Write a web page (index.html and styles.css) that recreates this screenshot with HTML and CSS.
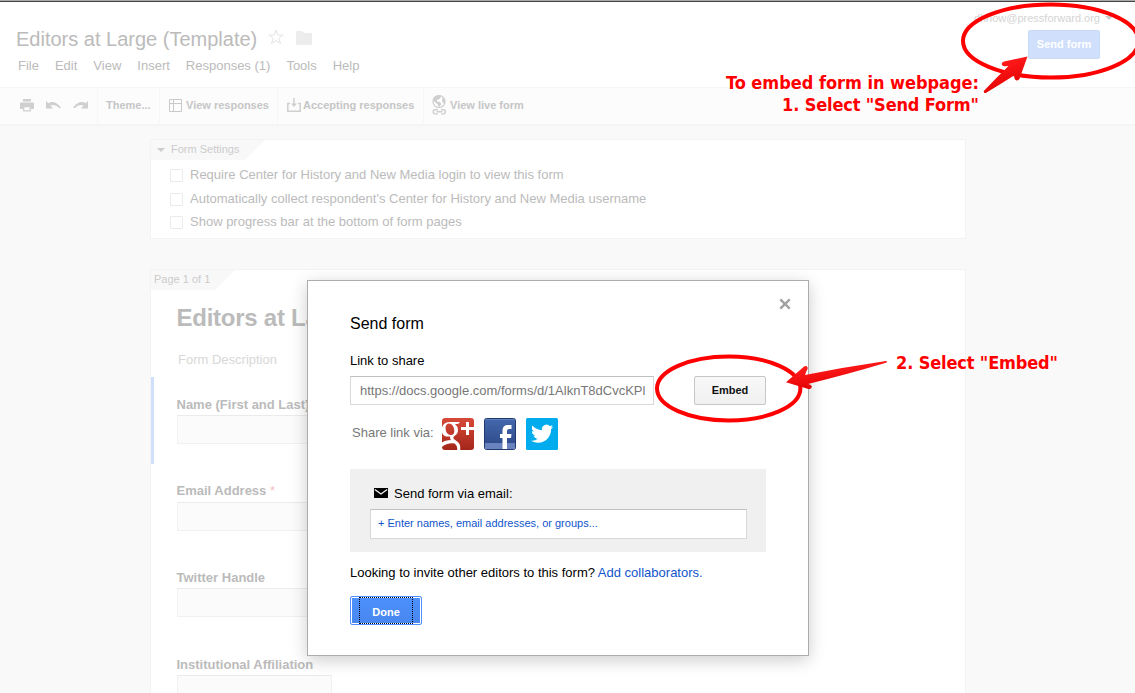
FILE: index.html
```html
<!DOCTYPE html>
<html lang="en">
<head>
<meta charset="utf-8">
<title>Editors at Large (Template)</title>
<link rel="stylesheet" href="styles.css">
</head>
<body>
<div class="app">
  <header class="header">
    <div class="doc">
      <div class="doc-title">
        <h1>Editors at Large (Template)</h1>
        <svg class="star" width="16" height="16" viewBox="0 0 16 16"><path d="M8 1l1.800 5h5.400l-4.300 3.300 1.600 5.300L8 11.500l-4.500 3.100 1.600-5.300L.8 6h5.400z" fill="none" stroke="#e4e4e4"/></svg>
        <svg class="folder" width="16" height="14" viewBox="0 0 16 14"><path d="M0 1q0-1 1-1h5l2 2h7q1 0 1 1v10q0 1-1 1H1q-1 0-1-1z" fill="#ececec"/></svg>
      </div>
      <nav class="menu"><span>File</span><span>Edit</span><span>View</span><span>Insert</span><span>Responses (1)</span><span>Tools</span><span>Help</span></nav>
    </div>
    <div class="account">
      <div class="user">dhnow@pressforward.org<i class="caret"></i></div>
      <button class="send-btn">Send form</button>
    </div>
  </header>

  <div class="toolbar">
    <div class="tool icons">
      <svg width="14" height="13" viewBox="0 0 14 13"><path fill="#cfcfcf" d="M3 0h8v2.500H3zM1 3.500h12q1 0 1 1V10h-3V7H3v3H0V4.500q0-1 1-1z"/><path fill="none" stroke="#cfcfcf" stroke-width="1.300" d="M3.700 7.500h6.600v4.300H3.700z"/></svg>
      <svg width="15" height="9" viewBox="0 0 15 9"><path fill="#cfcfcf" d="M0 0l2.300 2.300Q8-1.500 15 6.500l-1.500.8Q9 2.500 4.400 4.500L7 7.500H0z"/></svg>
      <svg width="15" height="9" viewBox="0 0 15 9"><path fill="#cfcfcf" d="M15 0l-2.300 2.300Q7-1.500 0 6.500l1.500.8Q6 2.500 10.600 4.500L8 7.500h7z"/></svg>
    </div>
    <div class="tool theme">Theme...</div>
    <div class="tool view">
      <svg width="13" height="13" viewBox="0 0 13 13"><path fill="none" stroke="#c9c9c9" d="M.5.5h12v12H.5zM4.500.5v12M.5 4.500h12" /></svg>
      <span>View responses</span>
    </div>
    <div class="tool accept">
      <svg width="14" height="14" viewBox="0 0 14 14"><path fill="none" stroke="#cfcfcf" stroke-width="1.500" d="M3 5.500H.8v7.700h12.400V5.500H11M7 0v8"/><path fill="#cfcfcf" d="M4 5.500h6L7 9z"/></svg>
      <span>Accepting responses</span>
    </div>
    <div class="tool live">
      <svg width="15" height="20" viewBox="0 0 15 20"><circle cx="7" cy="6.500" r="6" fill="#fff" stroke="#cfcfcf" stroke-width="1.200"/><path fill="#cfcfcf" d="M1 4q2-4 7-3.500L9 2 7.500 4 5 5v1.500l3 .5 1.500 2L7 12.500 5.500 9 2.500 7zM10 3l2.500 1 .7 3-1 2-2-2z"/><path fill="none" stroke="#cfcfcf" stroke-width="1.400" d="M6 14.700H3.300a2.100 2.100 0 0 0 0 4.200H6M9 14.700h2.300a2.100 2.100 0 0 1 0 4.200H9M4.500 16.800h6"/></svg>
      <span>View live form</span>
    </div>
  </div>

  <main class="canvas">
    <section class="card settings">
      <div class="tab"><i class="caret"></i>Form Settings</div>
      <ul>
        <li><i class="box"></i>Require Center for History and New Media login to view this form</li>
        <li><i class="box"></i>Automatically collect respondent's Center for History and New Media username</li>
        <li><i class="box"></i>Show progress bar at the bottom of form pages</li>
      </ul>
    </section>
    <section class="card page">
      <div class="tab">Page 1 of 1</div>
      <h2>Editors at Large</h2>
      <p class="desc">Form Description</p>
      <div class="question active"><label>Name (First and Last)</label><div class="field"></div></div>
      <div class="question email"><label>Email Address <em>*</em></label><div class="field"></div></div>
      <div class="question twitter"><label>Twitter Handle</label><div class="field"></div></div>
      <div class="question"><label>Institutional Affiliation</label><div class="field"></div></div>
    </section>
  </main>
</div>

<div class="dialog">
  <svg class="close" width="12" height="12" viewBox="0 0 12 12"><path d="M1.300 1.300l9.400 9.400M10.700 1.300l-9.400 9.400" stroke="#a2a2a2" stroke-width="2.400"/></svg>
  <h3>Send form</h3>
  <p class="link-label">Link to share</p>
  <div class="link-row">
    <div class="link-input"><span>https://docs.google.com/forms/d/1AlknT8dCvcKPl</span></div>
    <button class="embed">Embed</button>
  </div>
  <div class="share">
    <span>Share link via:</span>
    <svg width="32" height="32" viewBox="0 0 32 32">
      <defs><linearGradient id="gr" x2="0" y2="1"><stop offset="0" stop-color="#d84a38"/><stop offset="1" stop-color="#a3261a"/></linearGradient><clipPath id="gc"><rect width="32" height="32" rx="3"/></clipPath></defs>
      <g clip-path="url(#gc)"><rect width="32" height="32" fill="url(#gr)"/>
      <path fill="#fff" fill-rule="evenodd" d="M8.500 4H18l-2 2h-3q3 2.500 3 6 0 3.500-3 5.500-1.700 1.300-1.700 2.200 0 1 2.200 2.500 4.700 3 4.700 6.300V32h-3q.5-4-2.500-6.500Q5 24.500 0 29v-4.500Q3 22 9 22q-1.500-1.700-.7-3.500Q0 19.500-.5 12 0 4 8.500 4zM7.500 5.500Q3.500 5.500 3.500 10q.5 7 5.200 7 3.800-.3 3.600-4.500-.8-6.500-4.800-7z"/>
      <path d="M25.500 4v13M19 10.500h13" stroke="#fff" stroke-width="3"/></g>
    </svg>
    <svg width="32" height="32" viewBox="0 0 32 32">
      <defs><linearGradient id="fb" x2="0" y2="1"><stop offset="0" stop-color="#4468ad"/><stop offset="1" stop-color="#2c4786"/></linearGradient></defs>
      <rect x=".5" y=".5" width="31" height="31" rx="2" fill="url(#fb)" stroke="#20396f"/><path fill="#6883bd" d="M1 25h30v6H1z"/><path stroke="#5f80be" d="M1.500 1.500h29"/><path fill="#fff" d="M18.500 31V20H16v-4h2.500v-3.500q0-5.500 5.500-5.500h3.500v4H25q-2 0-2 2v3h4.500l-.5 4h-4v11z"/>
    </svg>
    <svg width="32" height="32" viewBox="0 0 32 32">
      <rect width="32" height="32" rx="1.500" fill="#00aced"/><path fill="#fff" transform="translate(5 4.500) scale(.93)" d="M23.950 4.570a10 10 0 0 1-2.820.77 4.960 4.960 0 0 0 2.160-2.720c-.95.560-2 .96-3.120 1.180a4.920 4.920 0 0 0-8.380 4.480C7.690 8.100 4.070 6.130 1.640 3.160a4.820 4.820 0 0 0-.67 2.480c0 1.710.87 3.210 2.190 4.100a4.900 4.900 0 0 1-2.230-.62v.06a4.920 4.920 0 0 0 3.950 4.830 5 5 0 0 1-2.210.08 4.940 4.940 0 0 0 4.600 3.420A9.870 9.870 0 0 1 0 19.540a13.990 13.990 0 0 0 7.550 2.210c9.050 0 14-7.500 14-13.980 0-.21 0-.42-.02-.63a9.940 9.940 0 0 0 2.420-2.570z"/>
    </svg>
  </div>
  <div class="mail">
    <div class="mail-label">
      <svg width="14" height="10" viewBox="0 0 14 10"><path d="M0 0h14v10H0z"/><path d="M.8 1.500L7 6l6.200-4.500" fill="none" stroke="#f0f0f0" stroke-width="1.400"/></svg>
      <span>Send form via email:</span>
    </div>
    <div class="mail-input">+ Enter names, email addresses, or groups...</div>
  </div>
  <p class="invite">Looking to invite other editors to this form? <a>Add collaborators.</a></p>
  <button class="done"><span>Done</span></button>
</div>

<svg class="marks" width="1135" height="693" viewBox="0 0 1135 693">
  <defs><linearGradient id="ar" x2=".4" y2="1"><stop offset=".3" stop-color="#ff1a1a"/><stop offset="1" stop-color="#e00000"/></linearGradient></defs>
  <g fill="none" stroke="#f00" stroke-width="4"><ellipse cx="1050.700" cy="41" rx="87.700" ry="36.500"/><ellipse cx="728.700" cy="388.500" rx="71.700" ry="32"/></g>
  <path fill="url(#ar)" d="M1027.500 56.500L1004 61.500q-3 1-2 3.500 1 1.500 3.500 1.200L1008.500 66Q996 78 983.800 91q-.3 2.500 2 2Q1000 84.500 1014 75.500l.5 3q1 2.500 3.500 1.800 2-.8 2-3z"/>
  <path fill="url(#ar)" d="M786 382.300L803.500 367q2.500-1.800 4 0 .8 2-1 4l-1.500 4Q845 367 886 361q2 .5 0 1.800Q845 375 808 384l2.500.8q2 1.500 1 3.300-1.500 1.500-4 .7z"/>
  <g class="note"><text x="979" y="89" text-anchor="end" textLength="253">To embed form in webpage:</text><text x="979" y="111" text-anchor="end" textLength="197">1. Select "Send Form"</text><text x="896" y="369" textLength="162">2. Select "Embed"</text></g>
</svg>
</body>
</html>
```
FILE: styles.css
```css
* { box-sizing: border-box; margin: 0; padding: 0; }
body { width: 1135px; height: 693px; overflow: hidden; position: relative; background: #f9f9f9; font: 13px/16px "Liberation Sans", Arial, sans-serif; color: #000; }
svg { display: block; flex: none; }
button { font: bold 11px/14px "Liberation Sans", Arial, sans-serif; border-radius: 2px; padding-bottom: 2px; }
i { font-style: normal; }

.app { height: 693px; overflow: hidden; color: #bbb; }
.header { height: 87px; border-top: 1px solid #aaa; box-shadow: inset 0 1px #444; background: #fff; display: flex; justify-content: space-between; padding: 26px 35px 0 16px; }
.doc-title { display: flex; align-items: flex-start; }
.doc-title h1 { font-size: 20px; line-height: 24px; font-weight: normal; }
.star { margin: 2px 0 0 11px; }
.folder { margin: 4px 0 0 12px; }
.menu { display: flex; gap: 16px; margin: 7px 0 0 2px; }
.account { margin-top: -16px; display: flex; flex-direction: column; align-items: flex-end; }
.user { font-size: 11px; line-height: 14px; color: #d4d4d4; display: flex; align-items: center; margin-right: -13px; }
.caret { display: inline-block; border: 4px solid transparent; border-top-color: #ccc; border-bottom: 0; }
.user .caret { margin-left: 5px; }
.send-btn { width: 72px; height: 29px; margin-top: 5px; border: 1px solid #c9dbf9; background: #d0e0fc; color: #fff; }

.toolbar { height: 37px; background: #fcfcfc; border-top: 1px solid #f6f6f6; box-shadow: 0 1px 2px #f2f2f2; display: flex; color: #c6c6c6; font: bold 11px/14px "Liberation Sans", Arial, sans-serif; }
.tool { display: flex; align-items: center; border-right: 1px solid #f7f7f7; padding-bottom: 2px; }
.tool:last-child { border: 0; }
.icons { width: 98px; padding-left: 20px; gap: 12px; }
.theme { width: 62px; padding-left: 8px; }
.view { width: 118px; padding-left: 9px; gap: 4px; }
.accept { width: 146px; padding-left: 9px; gap: 2px; }
.live { padding-left: 8px; gap: 3px; }

.canvas { padding: 15px 169px 0 150px; }
.card { border: 1px solid #f3f3f3; background: #fff; }
.tab { height: 20px; line-height: 19px; background: #f8f8f8; font-size: 11px; color: #ccc; clip-path: polygon(0 0, 100% 0, calc(100% - 20px) 100%, 0 100%); }
.settings { height: 100px; }
.settings .tab { width: 114px; padding: 0 0 2px 6px; display: flex; align-items: center; }
.settings .caret { margin: 2px 6px 0 0; }
.settings ul { list-style: none; padding: 3px 0 0 19px; display: grid; grid-template-rows: 24px 24px 22px; }
.settings li { display: flex; align-items: center; }
.box { width: 13px; height: 13px; border: 1px solid #ebebeb; border-radius: 1px; margin: 1px 7px 0 0; }
.page { margin-top: 30px; height: 480px; }
.page .tab { width: 84px; padding-left: 3px; }
.page h2 { margin: 14px 0 0 25.500px; font-size: 24px; line-height: 28px; letter-spacing: -.25px; }
.desc { margin: 20px 0 0 27px; color: #d8d8d8; }
.question { height: 87px; padding: 20px 0 0 25.500px; font-weight: bold; }
.question label { display: block; }
.question em { font-style: normal; font-weight: normal; color: #f3c1bb; }
.active { margin-top: 9px; border-left: 3px solid #d0e0fc; padding-left: 22.500px; }
.active .field { margin-top: 2px; }
.email { height: 86px; padding-top: 19px; }
.field { width: 155px; height: 29px; margin: 3px 0 0 .5px; background: #fbfbfb; border: 1px solid #f1f1f1; border-top-color: #ebebeb; }
.twitter .field, .twitter + .question .field { margin-top: 2px; }

.dialog { position: absolute; left: 307px; top: 280px; width: 502px; height: 376px; border: 1px solid #acacac; background: #fff; box-shadow: 0 4px 16px rgba(0,0,0,.2); padding: 33px 42px 0; }
.close { position: absolute; right: 17px; top: 17px; }
.dialog h3 { font-size: 16px; line-height: 20px; font-weight: normal; }
.link-label { margin-top: 19px; }
.link-row { display: flex; justify-content: space-between; margin-top: 7px; }
.link-input { width: 304px; height: 29px; border: 1px solid #d9d9d9; border-top-color: #c0c0c0; padding: 6px 8px 0 9px; color: #777; }
.link-input span { display: block; overflow: hidden; white-space: nowrap; }
.embed { width: 72px; height: 29px; border: 1px solid #c6c6c6; background: linear-gradient(#f8f8f8, #f0f0f0); color: #111; }
.share { display: flex; align-items: center; gap: 10px; color: #777; margin-top: 13px; height: 32px; padding-left: 2px; }
.share span { width: 80px; white-space: nowrap; line-height: 16px; margin-top: -3px; }
.mail { margin-top: 19px; height: 83px; background: #f0f0f0; padding: 17px 19px 0 20px; }
.mail-label { display: flex; align-items: center; gap: 6px; padding-left: 4px; }
.mail-label svg { margin-top: -2px; }
.mail-input { margin-top: 7px; height: 30px; background: #fff; border: 1px solid #d9d9d9; border-top-color: #c0c0c0; color: #15c; font-size: 11px; line-height: 27px; padding-left: 7px; }
.invite { margin-top: 13px; }
.invite a { color: #15c; }
.done { display: block; margin-top: 15px; width: 72px; height: 29px; border: 1px solid #4d90fe; background: linear-gradient(#4d90fe, #4787ed); box-shadow: inset 0 0 0 1px #fff; color: #fff; padding: 0 8px; }
.done span { display: block; height: 27px; line-height: 27px; padding-top: 1px; border: 1px dotted #000; }

.marks { position: absolute; left: 0; top: 0; }
.note { fill: #f00; font: bold 18px "DejaVu Sans Condensed", "Noto Sans", sans-serif; }
```
